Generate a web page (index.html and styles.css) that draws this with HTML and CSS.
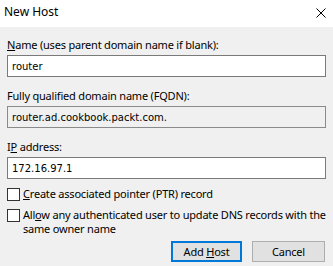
FILE: index.html
```html
<!DOCTYPE html>
<html lang="en">
<head>
<meta charset="UTF-8">
<title>New Host</title>
<link rel="stylesheet" href="styles.css">
</head>
<body>
<div class="dialog">
    <div class="titlebar">
        <span class="title">New Host</span>
        <svg class="close" width="10" height="10" viewBox="0 0 10 10">
            <path d="M0.5 0.5 L9.5 9.5 M9.5 0.5 L0.5 9.5" stroke="#000" stroke-width="1" fill="none"/>
        </svg>
    </div>
    <div class="content">
        <label class="label"><u>N</u>ame (uses parent domain name if blank):</label>
        <input type="text" class="field" value="router">

        <label class="label">Fully qualified domain name (FQDN):</label>
        <input type="text" class="field readonly" value="router.ad.cookbook.packt.com." readonly>

        <label class="label">I<u>P</u> address:</label>
        <input type="text" class="field" value="172.16.97.1">

        <div class="check first">
            <span class="box"></span>
            <span class="check-text"><u>C</u>reate associated pointer (PTR) record</span>
        </div>
        <div class="check">
            <span class="box"></span>
            <span class="check-text">All<u>o</u>w any authenticated user to update DNS records with the<br>same owner name</span>
        </div>

        <div class="buttons">
            <button class="btn default">Add <u>H</u>ost</button>
            <button class="btn">Cancel</button>
        </div>
    </div>
</div>
</body>
</html>
```
FILE: styles.css
```css
body {
    margin: 0;
    font-family: "Noto Sans", sans-serif;
    font-size: 11px;
    letter-spacing: -0.2px;
    color: #000;
    background-color: #f0f0f0;
}
.dialog {
    width: 333px;
    height: 266px;
    overflow: hidden;
}
.titlebar {
    box-sizing: border-box;
    height: 27px;
    background-color: #fff;
    display: flex;
    align-items: center;
    justify-content: space-between;
    padding: 0 7px 0 4px;
}
.title {
    font-size: 12px;
    letter-spacing: 0;
    line-height: 15px;
    margin-bottom: 4px;
}
.close {
    margin-bottom: 1px;
}
.content {
    padding: 10px 7px 0 7px;
    display: flex;
    flex-direction: column;
    align-items: flex-start;
}
.label {
    line-height: 15px;
    margin-bottom: 3px;
}
.field {
    box-sizing: border-box;
    height: 22px;
    width: 319px;
    margin: 0 0 11px 0;
    padding: 0 4px;
    border: 1px solid #7a7a7a;
    background-color: #fff;
    font-family: "DejaVu Sans", sans-serif;
    font-size: 10px;
    letter-spacing: 0;
    color: #000;
    outline: none;
}
.field.readonly {
    background-color: #f0f0f0;
    border-color: #8a8a8a;
}
.check {
    display: flex;
    align-items: flex-start;
    gap: 3px;
    margin-top: 7px;
    line-height: 14px;
}
.check.first {
    margin-top: -3px;
}
.check-text {
    white-space: nowrap;
}
.box {
    flex: none;
    box-sizing: border-box;
    width: 13px;
    height: 13px;
    border: 1px solid #333;
    background-color: #fff;
    margin-top: 1px;
}
.buttons {
    align-self: stretch;
    display: flex;
    justify-content: flex-end;
    gap: 10px;
    margin-top: 5px;
    padding-right: 1px;
}
.btn {
    box-sizing: border-box;
    width: 73px;
    height: 21px;
    border: 1px solid #adadad;
    background-color: #e1e1e1;
    font-family: "Noto Sans", sans-serif;
    font-size: 11px;
    letter-spacing: -0.2px;
    color: #000;
    padding: 0;
}
.btn.default {
    border: 2px solid #0078d7;
    width: 71px;
}
```
